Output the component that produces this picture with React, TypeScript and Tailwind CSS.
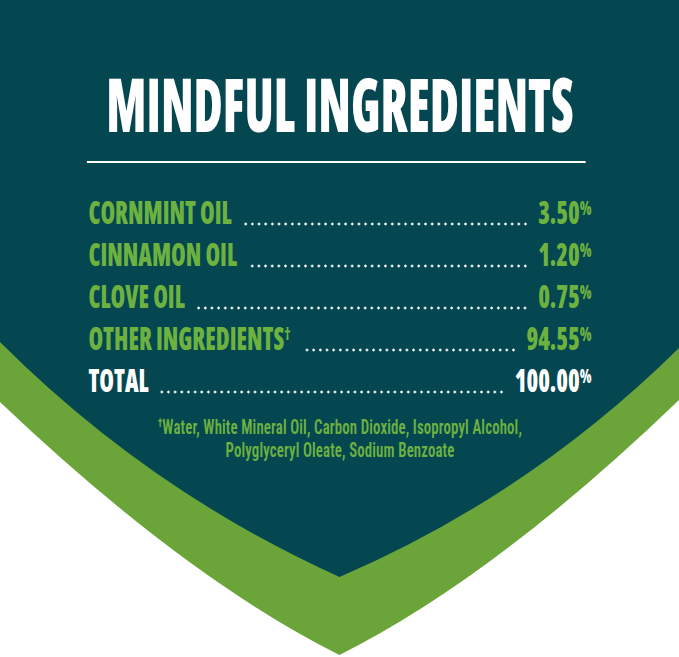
const rows = [
  { name: "CORNMINT OIL", value: "3.50", dagger: false, total: false },
  { name: "CINNAMON OIL", value: "1.20", dagger: false, total: false },
  { name: "CLOVE OIL", value: "0.75", dagger: false, total: false },
  { name: "OTHER INGREDIENTS", value: "94.55", dagger: true, total: false },
  { name: "TOTAL", value: "100.00", dagger: false, total: true },
];

function Row({ name, value, dagger, total }: { name: string; value: string; dagger: boolean; total: boolean }) {
  return (
    <div className={`flex h-[42px] text-[32px] leading-[42px] font-extrabold ${total ? "text-white" : "text-[#6db13f]"}`}>
      <span className="whitespace-nowrap">
        {name}
        {dagger && <span className="text-[17px] leading-none align-[10px]">†</span>}
      </span>
      <div className="flex-1 ml-[16px] mr-[13px] [background-image:radial-gradient(circle,#ffffff_1.2px,transparent_1.8px)] [background-size:9px_4px] [background-repeat:repeat-x] [background-position:right_0_top_31px]" />
      <span className="whitespace-nowrap">
        {value}
        <span className="text-[19px] leading-none align-[9px]">%</span>
      </span>
    </div>
  );
}

export default function App() {
  return (
    <div className="relative w-[679px] h-[657px] overflow-hidden bg-white">
      <svg className="absolute inset-0" width="679" height="657" viewBox="0 0 679 657">
        <path d="M0 0H679V400Q495 577 339.5 655Q184 577 0 402Z" fill="#6ba539" />
        <path d="M0 0H679V348Q530 495 339.5 577Q149 491 0 342Z" fill="#044751" />
      </svg>
      <div className="relative flex justify-center">
        <div className="w-[918px] shrink-0 scale-x-[0.74] flex flex-col font-['Open_Sans',sans-serif] font-stretch-condensed">
          <h1 className="mt-[67px] text-center text-[74px] leading-none font-extrabold text-white">
            <span className="inline-block scale-x-[0.91]">MINDFUL INGREDIENTS</span>
          </h1>
          <div className="mt-[20px] ml-[117px] mr-[127px] h-[2px] bg-white" />
          <div className="mt-[28px] px-[119px] flex flex-col">
            {rows.map((r) => (
              <Row key={r.name} {...r} />
            ))}
          </div>
          <div className="mt-[15px] flex flex-col items-center font-['Roboto',sans-serif] text-[20px] leading-[23px] font-semibold tracking-[0.2px] text-[#6db13f]">
            <p className="whitespace-nowrap">
              <span className="text-[12px] leading-none align-[7px]">†</span>Water, White Mineral Oil, Carbon Dioxide, Isopropyl Alcohol,
            </p>
            <p className="whitespace-nowrap">Polyglyceryl Oleate, Sodium Benzoate</p>
          </div>
        </div>
      </div>
    </div>
  );
}
